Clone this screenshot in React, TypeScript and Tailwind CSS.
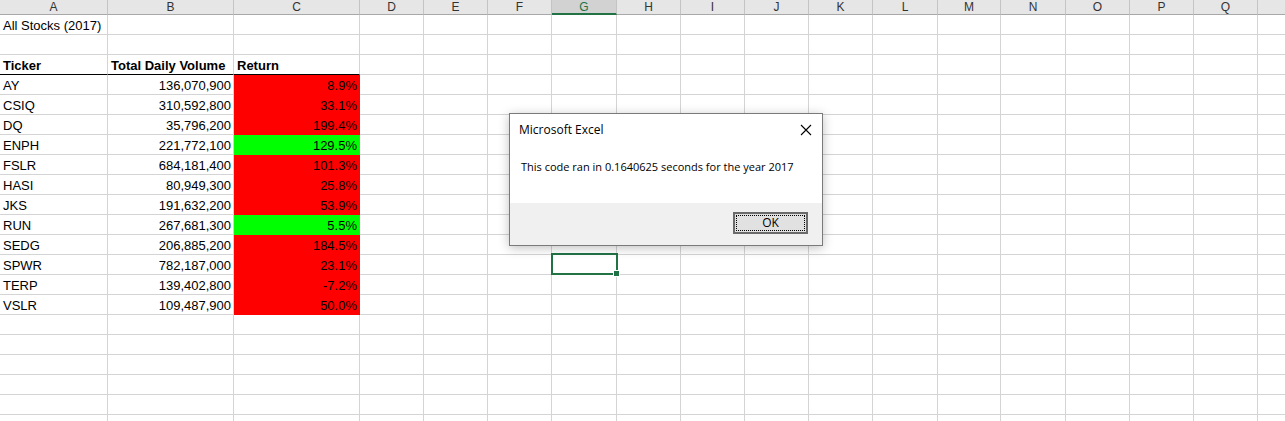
// column widths including the right gridline
const cols = [
  { key: 'A', w: 'w-[108px]' },
  { key: 'B', w: 'w-[126px]' },
  { key: 'C', w: 'w-[126px]' },
  { key: 'D', w: 'w-[64px]' },
  { key: 'E', w: 'w-[64px]' },
  { key: 'F', w: 'w-[64px]' },
  { key: 'G', w: 'w-[65px]' },
  { key: 'H', w: 'w-[64px]' },
  { key: 'I', w: 'w-[64px]' },
  { key: 'J', w: 'w-[64px]' },
  { key: 'K', w: 'w-[64px]' },
  { key: 'L', w: 'w-[65px]' },
  { key: 'M', w: 'w-[63px]' },
  { key: 'N', w: 'w-[65px]' },
  { key: 'O', w: 'w-[64px]' },
  { key: 'P', w: 'w-[64px]' },
  { key: 'Q', w: 'w-[64px]' },
  { key: '', w: 'w-[64px]' },
];

const stocks = [
  { t: 'AY', v: '136,070,900', r: '8.9%', up: false },
  { t: 'CSIQ', v: '310,592,800', r: '33.1%', up: false },
  { t: 'DQ', v: '35,796,200', r: '199.4%', up: false },
  { t: 'ENPH', v: '221,772,100', r: '129.5%', up: true },
  { t: 'FSLR', v: '684,181,400', r: '101.3%', up: false },
  { t: 'HASI', v: '80,949,300', r: '25.8%', up: false },
  { t: 'JKS', v: '191,632,200', r: '53.9%', up: false },
  { t: 'RUN', v: '267,681,300', r: '5.5%', up: true },
  { t: 'SEDG', v: '206,885,200', r: '184.5%', up: false },
  { t: 'SPWR', v: '782,187,000', r: '23.1%', up: false },
  { t: 'TERP', v: '139,402,800', r: '-7.2%', up: false },
  { t: 'VSLR', v: '109,487,900', r: '50.0%', up: false },
];

type Cell = { text?: string; bold?: boolean; right?: boolean; fill?: string; bottom?: string };

const Row = ({ cells, active }: { cells: Cell[]; active?: boolean }) => (
  <div className="flex h-[20px]">
    <div className={active ? 'w-px bg-[#217346]' : 'w-px bg-[#9b9b9b]'} />
    {cols.map((c, i) => {
      const cell = cells[i] || {};
      return (
        <div
          key={i}
          className={`${c.w} shrink-0 flex items-end border-r border-b overflow-visible whitespace-nowrap leading-[16px] ${
            cell.right ? 'justify-end pr-[2px]' : 'pl-[3px]'
          } ${cell.fill ?? 'border-[#d4d4d4]'} ${cell.bottom ?? ''} ${cell.bold ? 'font-bold' : ''}`}
        >
          {cell.text}
        </div>
      );
    })}
  </div>
);

export default function App() {
  const rows: { cells: Cell[]; active?: boolean }[] = [
    { cells: [{ text: 'All Stocks (2017)' }] },
    { cells: [] },
    {
      cells: [
        { text: 'Ticker', bold: true, bottom: '!border-b-black' },
        { text: 'Total Daily Volume', bold: true, bottom: '!border-b-black' },
        { text: 'Return', bold: true, bottom: '!border-b-black' },
      ],
    },
    ...stocks.map((s, i) => ({
      active: i === 9,
      cells: [
        { text: s.t },
        { text: s.v, right: true },
        {
          text: s.r,
          right: true,
          fill: s.up ? 'bg-[#00ff00] border-[#00ff00]' : 'bg-[#ff0000] border-[#ff0000]',
        },
      ],
    })),
    { cells: [] },
    { cells: [] },
    { cells: [] },
    { cells: [] },
    { cells: [] },
    { cells: [] },
  ];

  return (
    <div className="relative w-[1285px] h-[421px] overflow-hidden bg-white text-black text-[13px] font-['Liberation_Sans',Arial,sans-serif]">
      {/* column headers */}
      <div className="flex h-[15px] bg-[#e6e6e6]">
        <div className="w-px bg-[#9b9b9b]" />
        {cols.map((c, i) => (
          <div
            key={i}
            className={`${c.w} shrink-0 flex items-center justify-center text-[12px] leading-[14px] border-r ${
              c.key === 'G'
                ? 'bg-[#d2d2d2] text-[#217346] border-r-[#c4c4c4] border-b-2 border-b-[#217346]'
                : 'text-[#333] border-r-[#c4c4c4] border-b border-b-[#a8a8a8]'
            }`}
          >
            {c.key}
          </div>
        ))}
      </div>

      {rows.map((r, i) => (
        <Row key={i} cells={r.cells} active={r.active} />
      ))}

      {/* active cell G13 */}
      <div className="absolute left-[551px] top-[253px] w-[67px] h-[22px] border-2 border-[#217346]">
        <div className="absolute right-[-4px] bottom-[-4px] w-[7px] h-[7px] bg-[#217346] border border-white" />
      </div>

      {/* message box */}
      <div className="absolute left-[509px] top-[113px] w-[314px] h-[133px] border border-[#7a7a7a] bg-white shadow-[0_2px_10px_rgba(0,0,0,0.25)] flex flex-col font-['Open_Sans','Noto_Sans',sans-serif] text-[11px]">
        <div className="h-[89px] flex flex-col">
          <div className="flex items-center justify-between h-[30px] pl-[9px] pr-[10px] pt-[1px]">
            <span className="text-[12px]">Microsoft Excel</span>
            <svg width="12" height="12" viewBox="0 0 12 12" className="text-black">
              <path d="M1 1L11 11M11 1L1 11" stroke="currentColor" strokeWidth="1.1" fill="none" />
            </svg>
          </div>
          <div className="pl-[11px] mt-[15px]">This code ran in 0.1640625 seconds for the year 2017</div>
        </div>
        <div className="flex-1 bg-[#f0f0f0] flex justify-end items-start pt-[9px] pr-[14px]">
          <button className="w-[75px] h-[22px] bg-[#e1e1e1] border-2 border-[#6b6b6b] p-px">
            <div className="w-full h-full border border-dotted border-black flex items-center justify-center text-[12px] leading-none">
              OK
            </div>
          </button>
        </div>
      </div>
    </div>
  );
}
